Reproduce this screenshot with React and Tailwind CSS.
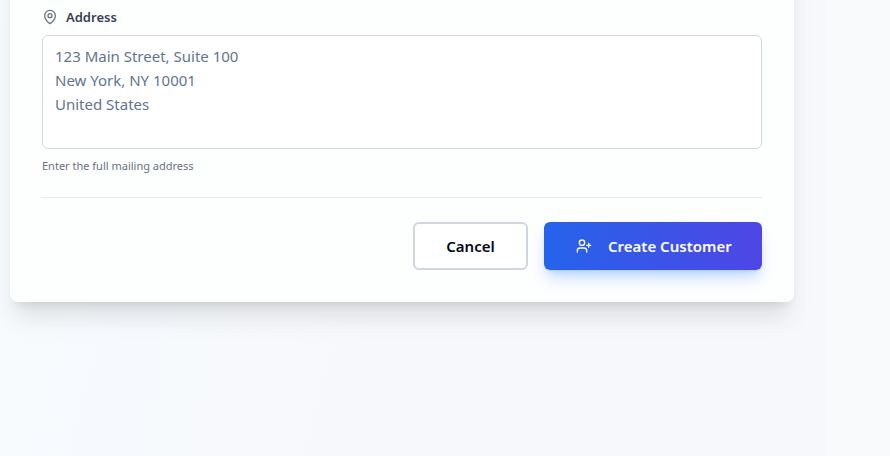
import React from "react";
import { MapPin, UserPlus } from "lucide-react";

const PLACEHOLDER = "123 Main Street, Suite 100\nNew York, NY 10001\nUnited States";

const App = () => {
    return (
        <div className="min-h-screen bg-[#f9fafc] pr-16 font-['Segoe_UI','Noto_Sans',sans-serif]">
            <main className="flow-root min-h-screen overflow-hidden bg-[linear-gradient(105deg,#f6fbfe,#f7f8fc_50%,#f7f8fb)] pl-[10px] pr-8">
                {/* Card runs on past the top edge */}
                <form
                    className="-mt-16 rounded-lg bg-[#fdfefe] px-8 pb-8 pt-[72px] shadow-xl"
                    onSubmit={(e) => e.preventDefault()}
                >
                    {/* Address field */}
                    <label
                        htmlFor="address"
                        className="flex items-center gap-2 text-[13px] leading-[18px] font-semibold text-gray-700"
                    >
                        <MapPin className="h-4 w-4 text-gray-500" />
                        Address
                    </label>
                    <textarea
                        id="address"
                        rows={4}
                        placeholder={PLACEHOLDER}
                        className="mt-[9px] block h-[114px] w-full resize-none rounded-md border border-gray-300 bg-white px-3 py-2 text-[15px] leading-6 text-slate-900 placeholder:text-slate-500"
                    />
                    <p className="mt-2 text-[11px] leading-[18px] text-gray-500">
                        Enter the full mailing address
                    </p>

                    {/* Actions */}
                    <div className="mt-[22px] flex justify-end gap-4 border-t border-gray-200 pt-6">
                        <button
                            type="button"
                            className="h-12 w-[115px] rounded-md border-2 border-gray-300 bg-white text-[15px] font-semibold text-slate-950"
                        >
                            Cancel
                        </button>
                        <button
                            type="submit"
                            className="flex h-12 w-[218px] items-center gap-4 rounded-md bg-linear-to-r/srgb from-[#2563eb] to-[#4f46e5] pl-8 text-[15px] font-semibold text-white shadow-lg shadow-blue-500/30"
                        >
                            <UserPlus className="h-4 w-4" />
                            Create Customer
                        </button>
                    </div>
                </form>
            </main>
        </div>
    );
};

export default App;
